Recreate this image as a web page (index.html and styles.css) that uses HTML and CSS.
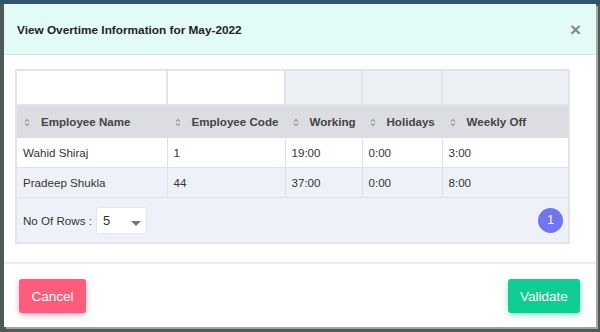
FILE: index.html
```html
<!DOCTYPE html>
<html lang="en">
<head>
    <meta charset="UTF-8">
    <title>Overtime</title>
    <link rel="stylesheet" href="styles.css">
</head>
<body>
    <div class="modal">
        <div class="modal-header">
            <h4>View Overtime Information for May-2022</h4>
            <span class="close">&times;</span>
        </div>
        <div class="modal-body">
            <table class="grid">
                <colgroup>
                    <col style="width:151px">
                    <col style="width:118px">
                    <col style="width:77px">
                    <col style="width:80px">
                    <col>
                </colgroup>
                <tr class="filter-row">
                    <td class="white"></td>
                    <td class="white"></td>
                    <td></td>
                    <td></td>
                    <td></td>
                </tr>
                <tr class="head-row">
                    <th><span class="sort"><svg width="6" height="9" viewBox="0 0 6 9"><path d="M1 3.5 L3 1.5 L5 3.5 M1 5.5 L3 7.5 L5 5.5" fill="none" stroke="#9a9a9a" stroke-width="1.1"/></svg></span>Employee Name</th>
                    <th><span class="sort"><svg width="6" height="9" viewBox="0 0 6 9"><path d="M1 3.5 L3 1.5 L5 3.5 M1 5.5 L3 7.5 L5 5.5" fill="none" stroke="#9a9a9a" stroke-width="1.1"/></svg></span>Employee Code</th>
                    <th><span class="sort"><svg width="6" height="9" viewBox="0 0 6 9"><path d="M1 3.5 L3 1.5 L5 3.5 M1 5.5 L3 7.5 L5 5.5" fill="none" stroke="#9a9a9a" stroke-width="1.1"/></svg></span>Working</th>
                    <th><span class="sort"><svg width="6" height="9" viewBox="0 0 6 9"><path d="M1 3.5 L3 1.5 L5 3.5 M1 5.5 L3 7.5 L5 5.5" fill="none" stroke="#9a9a9a" stroke-width="1.1"/></svg></span>Holidays</th>
                    <th><span class="sort"><svg width="6" height="9" viewBox="0 0 6 9"><path d="M1 3.5 L3 1.5 L5 3.5 M1 5.5 L3 7.5 L5 5.5" fill="none" stroke="#9a9a9a" stroke-width="1.1"/></svg></span>Weekly Off</th>
                </tr>
                <tr class="row">
                    <td>Wahid Shiraj</td>
                    <td>1</td>
                    <td>19:00</td>
                    <td>0:00</td>
                    <td>3:00</td>
                </tr>
                <tr class="row alt">
                    <td>Pradeep Shukla</td>
                    <td>44</td>
                    <td>37:00</td>
                    <td>0:00</td>
                    <td>8:00</td>
                </tr>
                <tr class="pager-row">
                    <td colspan="5">
                        <div class="pager">
                            <div class="rows">
                                <span>No Of Rows :</span>
                                <div class="select">5<span class="caret"></span></div>
                            </div>
                            <span class="page">1</span>
                        </div>
                    </td>
                </tr>
            </table>
        </div>
        <div class="modal-footer">
            <button class="btn cancel">Cancel</button>
            <button class="btn validate">Validate</button>
        </div>
    </div>
</body>
</html>
```

FILE: styles.css
```css
html, body {
    margin: 0;
    height: 100%;
}
body {
    background: linear-gradient(#2f5470 0, #2f5470 4px, #4d5a58 4px);
    padding: 4px 4px 0 4px;
    box-sizing: border-box;
    font-family: "Liberation Sans", Arial, sans-serif;
    overflow: hidden;
}
.modal {
    background: #fff;
    width: 592px;
    box-shadow: 2px 2px 0 #a3a6a6;
}
.modal-header {
    height: 50px;
    background: #e2fbf7;
    border-bottom: 1px solid #d8e2e2;
    display: flex;
    align-items: center;
    justify-content: space-between;
    padding: 0 15px 0 13px;
}
.modal-header h4 {
    margin: 0;
    font-size: 11.8px;
    font-weight: bold;
    color: #222;
    position: relative;
    top: 1px;
}
.close {
    font-size: 19px;
    font-weight: bold;
    color: #888;
    line-height: 1;
}
.modal-body {
    height: 209px;
    padding: 14px 0 0 11px;
    box-sizing: border-box;
    border-bottom: 2px solid #ececec;
}
.grid {
    width: 555px;
    border-collapse: collapse;
    border: 2px solid #e2e4e9;
    table-layout: fixed;
    color: #333;
    font-size: 11.6px;
}
.grid td, .grid th {
    border: 1px solid #dfe1e6;
    padding: 0 6px;
    text-align: left;
}
.filter-row td {
    height: 33px;
    background: #edf0f5;
    border: 2px solid #e2e4e9;
}
.filter-row td.white {
    background: #fff;
}
.head-row th {
    height: 31px;
    background: #dcdde1;
    color: #444;
    font-weight: bold;
    font-size: 11.6px;
    padding-left: 7px;
    white-space: nowrap;
    border-color: #dcdde1;
}
.sort {
    display: inline-block;
    width: 17px;
    vertical-align: -1px;
}
.row td {
    height: 29px;
    background: #fff;
}
.row.alt td {
    background: #eef1f8;
}
.pager-row td {
    height: 44px;
    background: #eef1f8;
    padding: 0 5px 0 6px;
}
.pager {
    display: flex;
    align-items: center;
    justify-content: space-between;
}
.rows {
    display: flex;
    align-items: center;
    gap: 4px;
    font-size: 11.6px;
    color: #333;
}
.select {
    width: 51px;
    height: 27px;
    box-sizing: border-box;
    background: #fff;
    border: 1px solid #e4e6ea;
    border-radius: 3px;
    padding: 0 6px;
    font-size: 13px;
    display: flex;
    align-items: center;
    justify-content: space-between;
    color: #333;
}
.caret {
    width: 0;
    height: 0;
    border-left: 5px solid transparent;
    border-right: 5px solid transparent;
    border-top: 5px solid #777;
    margin-top: 6px;
    margin-right: -1px;
}
.page {
    width: 25px;
    height: 25px;
    border-radius: 50%;
    background: #6f76f0;
    color: #fff;
    font-size: 12px;
    display: flex;
    align-items: center;
    justify-content: center;
}
.modal-footer {
    height: 63px;
    display: flex;
    justify-content: space-between;
    align-items: flex-start;
    padding: 15px 16px 0 15px;
    box-sizing: border-box;
}
.btn {
    height: 34px;
    border: none;
    border-radius: 3px;
    color: #fff;
    font-family: "Liberation Sans", Arial, sans-serif;
    font-size: 13.5px;
    padding: 0;
}
.cancel {
    width: 67px;
    background: #fe5c7c;
    box-shadow: 0 2px 6px rgba(254, 92, 124, 0.45);
}
.validate {
    width: 72px;
    background: #0fcd93;
    box-shadow: 0 2px 6px rgba(15, 205, 147, 0.45);
}
```
